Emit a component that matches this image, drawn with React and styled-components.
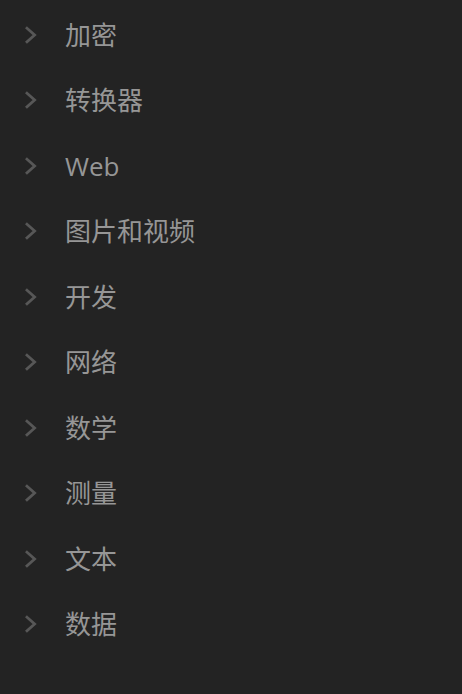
import React from "react";
import styled, { createGlobalStyle } from "styled-components";

const GlobalStyle = createGlobalStyle`
  html, body {
    margin: 0;
    padding: 0;
    background: #232323;
  }
  body {
    font-family: "Open Sans", "Noto Sans CJK SC", sans-serif;
  }
`;

const categories = [
  "加密",
  "转换器",
  "Web",
  "图片和视频",
  "开发",
  "网络",
  "数学",
  "测量",
  "文本",
  "数据",
];

const Menu = () => (
  <>
    <GlobalStyle />
    <Panel>
      {categories.map((name) => (
        <Row key={name}>
          <Chevron viewBox="0 0 12 18" aria-hidden="true">
            <path d="M2 2.2 L9.6 9 L2 15.8" />
          </Chevron>
          <Label>{name}</Label>
        </Row>
      ))}
    </Panel>
  </>
);

const Panel = styled.nav`
  width: 462px;
  height: 694px;
  background: #232323;
  padding-top: 2px;
  box-sizing: border-box;
  display: flex;
  flex-direction: column;
`;

const Row = styled.div`
  height: 65.5px;
  display: flex;
  align-items: center;
  padding-left: 25px;
  cursor: pointer;
`;

const Chevron = styled.svg`
  width: 12px;
  height: 18px;
  flex-shrink: 0;
  margin-right: 28px;

  path {
    fill: none;
    stroke: #575757;
    stroke-width: 2.8;
    stroke-linecap: square;
  }
`;

const Label = styled.span`
  font-size: 26px;
  line-height: 1;
  color: #969696;
`;

export default Menu;
